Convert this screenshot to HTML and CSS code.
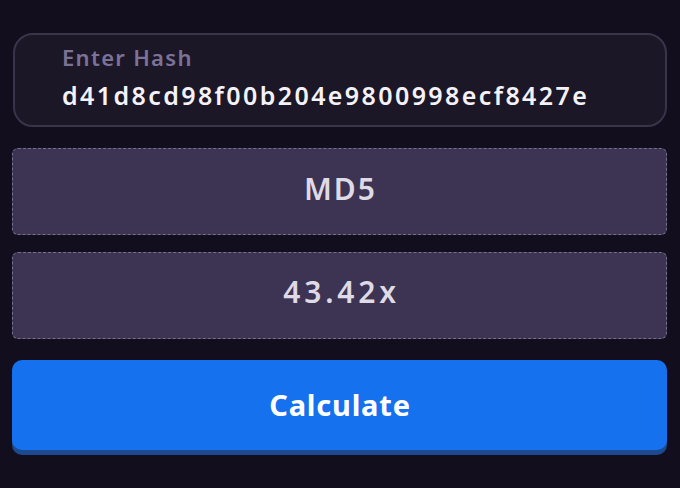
FILE: index.html
```html
<!DOCTYPE html>
<html>
<head>
<meta charset="utf-8">
<link rel="stylesheet" href="styles.css">
</head>
<body>
<div class="app">
  <div class="field">
    <div class="label">Enter Hash</div>
    <div class="value">d41d8cd98f00b204e9800998ecf8427e</div>
  </div>
  <div class="box">MD5</div>
  <div class="box">43.42x</div>
  <button class="btn">Calculate</button>
</div>
</body>
</html>
```
FILE: styles.css
```css
html, body {
  margin: 0;
  padding: 0;
  background: #120e1d;
  height: 100%;
}
body {
  font-family: "Noto Sans", "Open Sans", sans-serif;
}
.app {
  padding: 33px 13px 0 12px;
  display: flex;
  flex-direction: column;
}
.field {
  height: 94px;
  box-sizing: border-box;
  margin-left: 1px;
  border: 2px solid #3a344b;
  border-radius: 20px;
  background: #1b1726;
  padding: 9px 0 0 47px;
}
.label {
  color: #7b7298;
  font-size: 22px;
  font-weight: 600;
  line-height: 26px;
  letter-spacing: 1.3px;
}
.value {
  color: #f4f2f8;
  font-size: 25px;
  font-weight: 600;
  line-height: 34px;
  margin-top: 8px;
  letter-spacing: 2.4px;
}
.box {
  margin-top: 21px;
  height: 87px;
  box-sizing: border-box;
  border: 1px dashed #77708a;
  border-radius: 6px;
  background: #3c3452;
  color: #dedae6;
  font-size: 30px;
  font-weight: 600;
  letter-spacing: 2px;
  padding: 0 0 7px 2px;
  display: flex;
  align-items: center;
  justify-content: center;
}
.box + .box {
  margin-top: 17px;
  letter-spacing: 3.8px;
  padding: 0 0 8px 4px;
}
.btn {
  margin-top: 21px;
  height: 90px;
  border: none;
  border-radius: 10px;
  background: #1571ed;
  box-shadow: 0 5px 0 #1d4a8e;
  color: #ffffff;
  font-family: inherit;
  font-size: 29px;
  font-weight: 700;
  letter-spacing: 0.8px;
  padding: 0 0 2px 1px;
}
```
